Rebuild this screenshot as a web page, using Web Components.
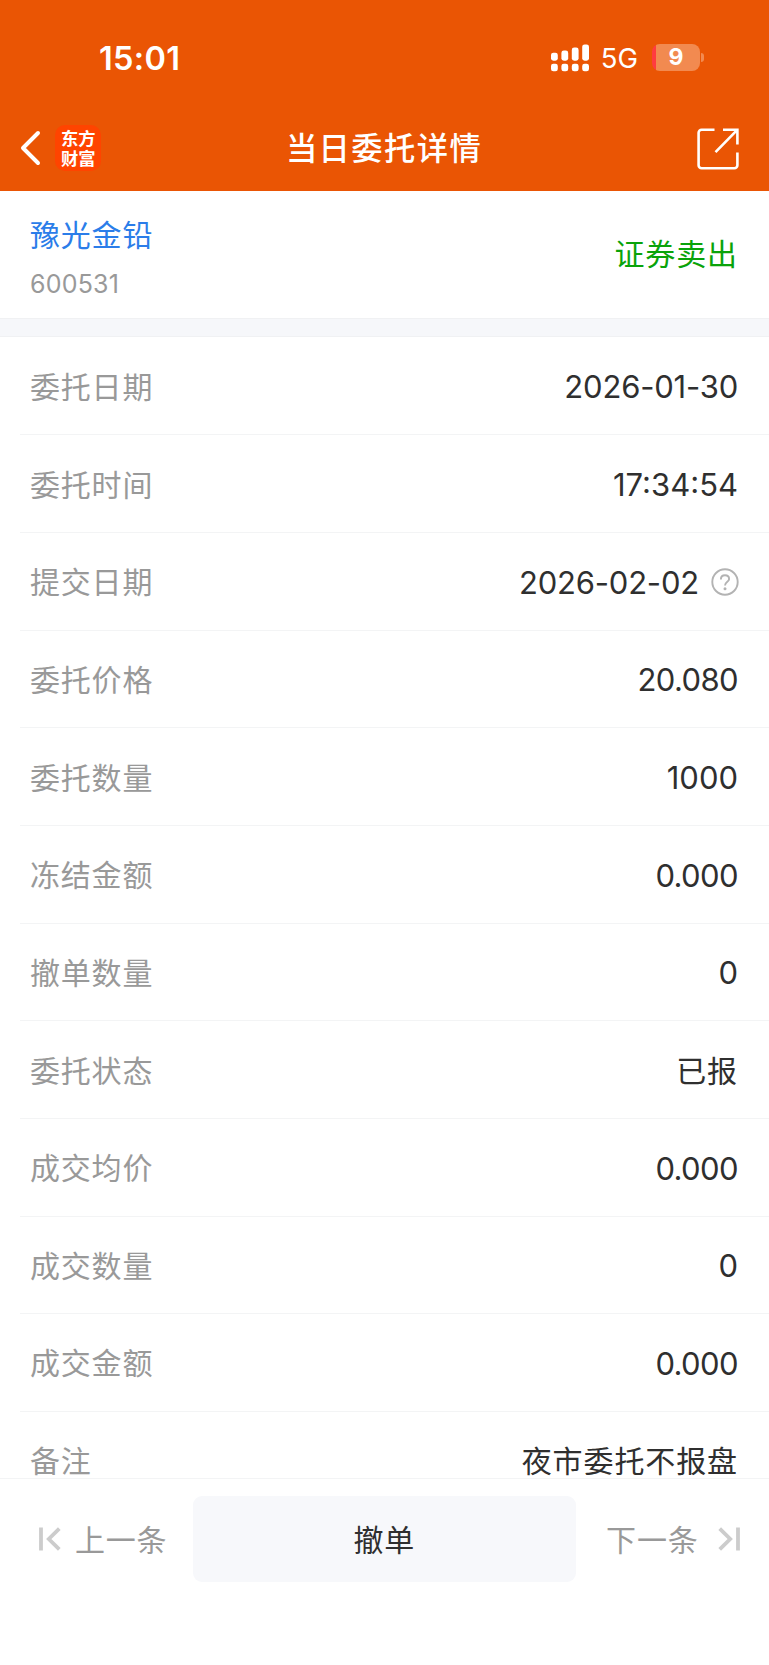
<!DOCTYPE html>
<html lang="zh-CN">
<head>
<meta charset="UTF-8">
<meta name="viewport" content="width=device-width, initial-scale=1.0">
<title>当日委托详情</title>
<style>
    body {
        margin: 0;
        background: #fff;
        font-family: Inter, "Noto Sans CJK SC", sans-serif;
        --brand: #ea5504;
        --text: #2f2f2f;
        --muted: #999;
        --line: #f3f4f5;
    }
</style>
</head>
<body>
<order-page></order-page>

<script>
// Status bar
class StatusBar extends HTMLElement {
    constructor() {
        super();
        this.attachShadow({ mode: 'open' });
    }

    connectedCallback() {
        this.shadowRoot.innerHTML = `
            <style>
                :host {
                    display: flex;
                    align-items: center;
                    justify-content: space-between;
                    height: 105px;
                    padding: 10px 65px 0 99px;
                    box-sizing: border-box;
                    background: var(--brand);
                    color: #fff;
                }
                .time { margin-top: 2px; font-size: 32.5px; font-weight: 600; line-height: 40px; letter-spacing: 0.3px; }
                .right { display: flex; align-items: center; }
                .net { font-size: 27.5px; line-height: 36px; margin: 1px 14px 0 11px; }
                .battery { display: flex; align-items: center; gap: 1px; }
                .body {
                    width: 48px;
                    height: 27px;
                    border-radius: 8px;
                    background: linear-gradient(90deg, #ff3b3f 4.5px, #f28a50 4.5px);
                    font-size: 23px;
                    font-weight: 700;
                    line-height: 27px;
                    text-align: center;
                }
                .cap { width: 3px; height: 9px; border-radius: 0 3px 3px 0; background: #f28a50; }
                svg { display: block; }
            </style>
            <span class="time">15:01</span>
            <div class="right">
                <svg width="39" height="28" viewBox="0 0 39 28" fill="#fff">
                    <rect x="0" y="8.7" width="6.8" height="8" rx="2.4"/>
                    <rect x="10.4" y="6.5" width="6.8" height="10.2" rx="2.4"/>
                    <rect x="20.8" y="3.5" width="6.8" height="13.2" rx="2.4"/>
                    <rect x="31.2" y="0.4" width="6.8" height="16.3" rx="2.4"/>
                    <rect x="0" y="19.7" width="6.8" height="7.6" rx="2.4"/>
                    <rect x="10.4" y="19.7" width="6.8" height="7.6" rx="2.4"/>
                    <rect x="20.8" y="19.7" width="6.8" height="7.6" rx="2.4"/>
                    <rect x="31.2" y="19.7" width="6.8" height="7.6" rx="2.4"/>
                </svg>
                <span class="net">5G</span>
                <div class="battery"><div class="body">9</div><div class="cap"></div></div>
            </div>
        `;
    }
}

// Title bar with back arrow, app logo and share button
class NavBar extends HTMLElement {
    constructor() {
        super();
        this.attachShadow({ mode: 'open' });
    }

    connectedCallback() {
        this.shadowRoot.innerHTML = `
            <style>
                :host {
                    display: grid;
                    grid-template-columns: 1fr auto 1fr;
                    align-items: center;
                    height: 86px;
                    padding: 0 28px 0 20px;
                    box-sizing: border-box;
                    background: var(--brand);
                    color: #fff;
                }
                .left { display: flex; align-items: center; gap: 14px; }
                .logo {
                    width: 46px;
                    height: 46px;
                    padding: 3px 5px 4px 6px;
                    box-sizing: border-box;
                    border-radius: 10px;
                    background: #ff4400;
                    font: 700 17.3px/19.5px "Noto Sans CJK SC", sans-serif;
                }
                h1 {
                    margin: 2px 0 0 7px;
                    font-size: 31.3px;
                    font-weight: 500;
                    line-height: 44px;
                    letter-spacing: 1.4px;
                }
                .share { justify-self: end; margin: 1px 1px 0 0; }
                svg { display: block; }
            </style>
            <div class="left">
                <svg width="21" height="36" viewBox="0 0 21 36" fill="none" stroke="#fff" stroke-width="4" stroke-linecap="round" stroke-linejoin="round">
                    <path d="M18 3 3 18 18 33"/>
                </svg>
                <div class="logo">东方财富</div>
            </div>
            <h1><slot></slot></h1>
            <svg class="share" width="44" height="44" viewBox="0 0 44 44" fill="none" stroke="#fff" stroke-width="2.6">
                <path d="M18.5 2.8H5.6a3 3 0 0 0-3 3V38.2a3 3 0 0 0 3 3H38.4a3 3 0 0 0 3-3V25.5"/>
                <path d="M27 2.8H41.4V17.5M41 3.2 19.5 25.2"/>
            </svg>
        `;
    }
}

// Stock name, code and trade direction
class StockHead extends HTMLElement {
    constructor() {
        super();
        this.attachShadow({ mode: 'open' });
    }

    connectedCallback() {
        this.shadowRoot.innerHTML = `
            <style>
                :host {
                    display: flex;
                    justify-content: space-between;
                    align-items: center;
                    height: 127px;
                    padding: 0 31px 0 30px;
                    box-sizing: border-box;
                    background: #fff;
                }
                .info { margin-top: 5px; }
                .name { color: #2b7de9; font-size: 30px; line-height: 44px; letter-spacing: 0.8px; }
                .code { color: var(--muted); font-size: 25px; line-height: 36px; margin-top: 9px; letter-spacing: 0.2px; }
                .side { margin-bottom: 2px; color: #0aa30a; font-size: 30px; line-height: 44px; letter-spacing: 0.9px; }
            </style>
            <div class="info">
                <div class="name">${this.getAttribute('name')}</div>
                <div class="code">${this.getAttribute('code')}</div>
            </div>
            <div class="side"><slot></slot></div>
        `;
    }
}

class DetailRow extends HTMLElement {
    constructor() {
        super();
        this.attachShadow({ mode: 'open' });
    }

    connectedCallback() {
        const help = this.hasAttribute('help') ? `
            <svg width="28" height="28" viewBox="0 0 28 28" fill="none" stroke="#b3b3b3" stroke-width="1.9">
                <circle cx="14" cy="14" r="12.7"/>
                <path d="M9.9 11.4C9.9 8.8 11.6 7.3 14 7.3S18.1 8.8 18.1 11C18.1 13.8 14 13.8 14 17.6"/>
                <circle cx="14" cy="20.7" r="1.5" fill="#b3b3b3" stroke="none"/>
            </svg>` : '';

        this.shadowRoot.innerHTML = `
            <style>
                :host {
                    display: flex;
                    flex: none;
                    justify-content: space-between;
                    align-items: center;
                    height: 97.67px;
                    margin-left: 20px;
                    padding: 2px 31px 0 10px;
                    box-sizing: border-box;
                    border-bottom: 1px solid var(--line);
                    font-size: 30px;
                    line-height: 44px;
                }
                .label { color: var(--muted); letter-spacing: 0.8px; }
                .value { display: flex; align-items: center; gap: 12px; color: var(--text); }
                .num, .date, .decimal { padding-top: 1px; font-size: 31px; }
                .date { letter-spacing: -0.2px; }
                .decimal { letter-spacing: -0.6px; }
                .text { letter-spacing: 0.9px; }
                svg { display: block; margin-right: -1px; }
            </style>
            <span class="label">${this.getAttribute('label')}</span>
            <span class="value"><span class="${this.getKind(this.textContent)}"><slot></slot></span>${help}</span>
        `;
    }

    getKind(value) {
        if (/^\d+-/.test(value)) return 'date';
        if (/^\d+\./.test(value)) return 'decimal';
        if (/^\d/.test(value)) return 'num';
        return 'text';
    }
}

// Bottom bar: previous / cancel order / next
class ActionBar extends HTMLElement {
    constructor() {
        super();
        this.attachShadow({ mode: 'open' });
    }

    connectedCallback() {
        this.shadowRoot.innerHTML = `
            <style>
                :host {
                    display: flex;
                    flex: none;
                    align-items: flex-start;
                    height: 187px;
                    padding: 17px 28px 0 38px;
                    box-sizing: border-box;
                    border-top: 1px solid var(--line);
                    background: #fff;
                    font-size: 30px;
                    letter-spacing: 0.8px;
                }
                .step { display: flex; align-items: center; height: 86px; color: var(--muted); }
                .step span { margin-bottom: 3px; }
                .prev { gap: 14px; width: 154.5px; }
                .next { flex: 1; gap: 19.5px; justify-content: flex-end; white-space: nowrap; }
                button {
                    width: 383.5px;
                    height: 86px;
                    padding: 0 0 3px;
                    border: 0;
                    border-radius: 9px;
                    background: #f7f8fb;
                    color: var(--text);
                    font: inherit;
                    letter-spacing: inherit;
                }
                svg { display: block; }
            </style>
            <div class="step prev">
                <svg width="23" height="24" viewBox="0 0 23 24" fill="none" stroke="#ccc" stroke-width="3.8">
                    <path d="M3 .5V23.5M21.3 1.6 10.8 12 21.3 22.4"/>
                </svg>
                <span>上一条</span>
            </div>
            <button>撤单</button>
            <div class="step next">
                <span>下一条</span>
                <svg width="23" height="24" viewBox="0 0 23 24" fill="none" stroke="#ccc" stroke-width="3.8">
                    <path d="M20 .5V23.5M1.7 1.6 12.2 12 1.7 22.4"/>
                </svg>
            </div>
        `;
    }
}

class OrderPage extends HTMLElement {
    constructor() {
        super();
        this.attachShadow({ mode: 'open' });
    }

    connectedCallback() {
        const rows = [
            ['委托日期', '2026-01-30'],
            ['委托时间', '17:34:54'],
            ['提交日期', '2026-02-02', 'help'],
            ['委托价格', '20.080'],
            ['委托数量', '1000'],
            ['冻结金额', '0.000'],
            ['撤单数量', '0'],
            ['委托状态', '已报'],
            ['成交均价', '0.000'],
            ['成交数量', '0'],
            ['成交金额', '0.000'],
            ['备注', '夜市委托不报盘'],
        ];

        this.shadowRoot.innerHTML = `
            <style>
                :host {
                    display: flex;
                    flex-direction: column;
                    height: 1665px;
                    overflow: hidden;
                }
                .gap {
                    flex: none;
                    height: 19px;
                    box-sizing: border-box;
                    border: solid #f0f1f3;
                    border-width: 1px 0;
                    background: #f6f7fa;
                }
                .list {
                    display: flex;
                    flex: 1;
                    flex-direction: column;
                    min-height: 0;
                    padding-top: 0.6px;
                    overflow: hidden;
                }
            </style>
            <status-bar></status-bar>
            <nav-bar>当日委托详情</nav-bar>
            <stock-head name="豫光金铅" code="600531">证券卖出</stock-head>
            <div class="gap"></div>
            <div class="list">
                ${rows.map(([label, value, extra = '']) => `<detail-row label="${label}" ${extra}>${value}</detail-row>`).join('')}
            </div>
            <action-bar></action-bar>
        `;
    }
}

customElements.define('status-bar', StatusBar);
customElements.define('nav-bar', NavBar);
customElements.define('stock-head', StockHead);
customElements.define('detail-row', DetailRow);
customElements.define('action-bar', ActionBar);
customElements.define('order-page', OrderPage);
</script>
</body>
</html>
